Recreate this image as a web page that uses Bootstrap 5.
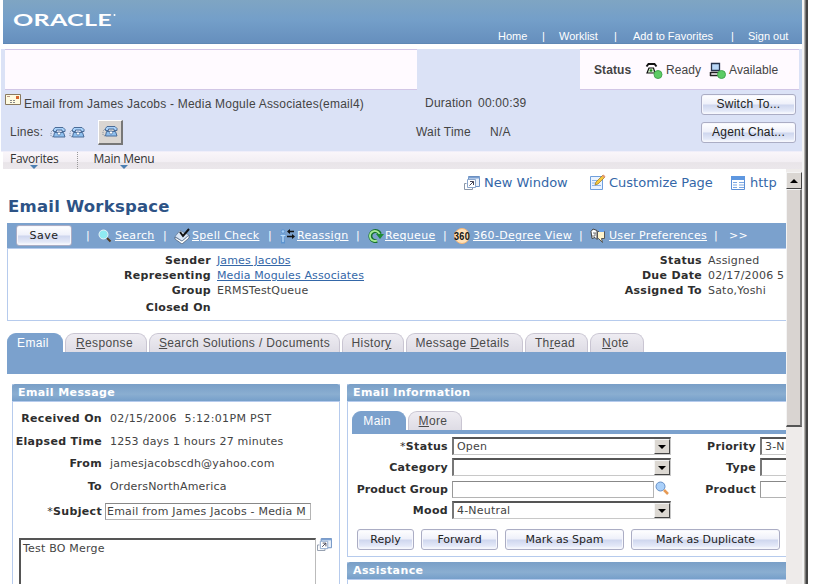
<!DOCTYPE html>
<html lang="en">
<head>
<meta charset="utf-8">
<title>Email Workspace</title>
<link rel="stylesheet" href="https://cdn.jsdelivr.net/npm/bootstrap@5.3.0/dist/css/bootstrap.min.css">
<style>
body{width:813px;height:584px;overflow:hidden;background:#fff;color:#444;font:11px/15px "DejaVu Sans",Verdana,sans-serif;letter-spacing:.2px}
a{color:#3467a8}
svg{display:block;flex:none}
.arial{font-family:"Liberation Sans",Arial,sans-serif;font-size:12px;letter-spacing:.22px}
.shell{width:802px;height:584px}
.edge{width:6px;background:linear-gradient(90deg,#f4f4f4 0 2px,#b5b2ad 2px 3px,#777 3px 4px,#444 4px 6px)}
.masthead{height:44px;margin-left:3px;background:linear-gradient(#7fa5c3,#749fc9 45%,#668fbd);border-bottom:1px solid #5f88b5;color:#fff}
.masthead-links{width:304px;padding-top:29px;font-size:11px;letter-spacing:0;display:grid!important;grid-template-columns:44px 17px 55px 19px 98px 17px 1fr;white-space:nowrap}
.cti{height:103px;margin:5px 0 0 1px;background:#dbe2f6;border-bottom:1px solid #f0eefa}
.cti-box{height:41px;background:#fffaff;border:solid #d2c6e6;border-width:1px 0}
.cti-left{width:412px;margin-left:4px}
.cti-right{width:219px;margin-right:3px;padding:2px 0 0 14px;letter-spacing:.1px}
.cti-line{display:grid;white-space:nowrap}
.pill{display:flex;align-items:center;justify-content:center;height:21px;padding:0;border:1px solid #abadc4;border-radius:3px;background:linear-gradient(#fff,#eef0fa 48%,#ced6ee 52%,#e4e9f8 85%,#fff);color:#222;white-space:nowrap;box-shadow:inset 0 0 0 1px #f6f7fd}
.phonebtn{width:25px;height:25px;background:#dad6d2;border:1px solid #fff;border-right:2px solid #777;border-bottom:2px solid #777;display:flex;align-items:center;justify-content:center}
.menubar{height:17px;margin-left:3px;background:linear-gradient(#faf6fa,#f2eef3 60%,#e9e5e9 62%,#ebe7eb);color:#333}
.menu-entry{position:relative;line-height:14px;font-family:"Open Sans",sans-serif;font-size:12px;letter-spacing:-.25px}
.menu-entry:after{content:"";position:absolute;left:50%;top:13px;margin-left:-4px;border:4px solid transparent;border-top-color:#4b7eb1;border-bottom:0}
.page{width:786px;height:415px;overflow:hidden;padding-left:7px}
.pagelinks{height:27px;padding-left:457px;font-size:13px;letter-spacing:0;color:#3467a8;white-space:nowrap}
.pagetitle{font:bold 16.500px/22px "DejaVu Sans",sans-serif;color:#2d5386;letter-spacing:.22px;margin:0 0 5px 1px;height:22px}
.toolstrip{height:26px;letter-spacing:.3px;background:#7ba1cd;border-bottom:1px solid #b6cbed;padding-left:9px;display:grid;grid-template-columns:70px 12px 17px 48px 11px 18px 76px 11px 18px 59px 12px 17px 58px 11px 19px 106px 11px 19px 105px 15px 30px;align-items:center;color:#fff;white-space:nowrap;width:779px}
.toolstrip a{color:#fff}
.summary{height:72px;border:1px solid #b6cbed;border-width:0 0 1px 1px;padding-top:4px}
.summary-grid{display:grid;grid-template-columns:203px 414px 77px 84px;column-gap:0;grid-template-rows:15px 15px 15px 19px;white-space:nowrap;align-items:center}
.summary-grid>:nth-child(4n+2){padding-left:6px}
.summary-grid>:nth-child(4n+4){padding-left:6px}
.summary-grid a{letter-spacing:.12px}
.lbl{font-weight:bold;color:#2e2e2e;text-align:right;letter-spacing:.32px;white-space:nowrap;justify-self:end}
.tabs{height:19px;gap:2px;letter-spacing:.35px}
.tabpill{height:19px;border:1px solid #c9c5d2;border-bottom:0;border-radius:9px 9px 0 0;background:linear-gradient(#eeecf2,#dedce5);color:#4a4a4a;text-align:center;line-height:18px;white-space:nowrap}
.tabpill.on{background:#7ba1cd;border-color:#7ba1cd;color:#fff;padding-right:4px}
.tabband{height:22px;background:#7ba1cd}
.pane{border-left:1px solid #b6cbed}
.pane-head{height:18px;margin-left:-1px;padding-left:6px;background:linear-gradient(#799fc7,#8aaed1 60%,#769fca);border-bottom:1px solid #b6cbed;border-radius:3px 0 0 0;color:#fff;font-weight:bold;line-height:18px;letter-spacing:.4px}
.msg{width:328px;height:200px;border-right:1px solid #b6cbed;margin-left:5px}
.msg .pane-head{margin-right:-1px;border-radius:3px 3px 0 0}
.msg-grid{display:grid;grid-template-columns:89px 1fr;grid-template-rows:23px 22px 23px 23px 27px;padding-top:5px;align-items:center;white-space:nowrap}
.msg-grid>:nth-child(even){padding-left:8px}
.field{height:17px;border:1px solid #b4b4b4;border-top-color:#888;border-left-color:#999;background:#fff;padding:0 2px;white-space:nowrap}
.sel{height:18px;border:1px solid #c8c8c8;border-top:2px solid #555;border-left:2px solid #777;background:#fff;padding-left:3px;display:flex;justify-content:space-between;align-items:center;white-space:nowrap}
.arrow{width:16px;height:15px;background:#dcd8d2;border:1px solid #f5f5f5;border-right-color:#444;border-bottom-color:#444;display:flex;align-items:center;justify-content:center}
.arrow:before,.upbtn:before{content:"";border:4px solid transparent;border-top-color:#000;border-bottom:0}
.info{width:439px;margin-left:7px}
.info-grid{display:grid;grid-template-columns:100px 222px 78px 80px;column-gap:4px;grid-template-rows:20px 22px 22px 20px;align-items:center;padding-top:2px}
.memo{width:297px;height:60px;border:2px solid #555;border-right:1px solid #bbb;padding:1px 2px;margin:13px 0 0 6px}
.scroller{width:16px;height:415px;background:#eeebea}
.upbtn{height:17px;margin-top:3px;background:#dad6d2;border:1px solid #f4f4f4;border-right-color:#444;border-bottom-color:#444;display:flex;align-items:center;justify-content:center}
.upbtn:before{transform:rotate(180deg)}
.thumb{height:238px;background:#d9d4d1;border:1px solid #f4f4f4;border-right:2px solid #777;border-bottom:2px solid #555}
</style>
<script src="https://cdn.jsdelivr.net/npm/bootstrap@5.3.0/dist/js/bootstrap.bundle.min.js"></script>
</head>
<body>
<svg width="0" height="0" class="position-absolute">
 <symbol id="phone" viewBox="0 0 16 11"><path d="M4.500 5.500h9l1.500 4.500H3.500z" fill="#8fc0ef" stroke="#4a6c98"/><path d="M3.500 4.500v-2l1.500-2h8l2 2v2h-3V3H6.500v1.500z" fill="#a9d2fa" stroke="#4a6c98"/><circle cx="9" cy="6.500" r="1.600" fill="#fff" stroke="#4a6c98" stroke-width=".7"/><path d="M3 3 1 5v4l2 1" fill="none" stroke="#7b8798" stroke-dasharray="1 1"/></symbol>
 <symbol id="popout" viewBox="0 0 16 14"><path d="M4.500.5h11v10h-11z" fill="#e9f0fa" stroke="#6b8fc0"/><path d="M4 1h12v1.500H4z" fill="#7ca1d2"/><path d="M2.500 7.500h-2v6h8v-2" fill="none" stroke="#8a96a8"/><path d="M3.500 3.500h8v8h-8z" fill="#fff" stroke="#8aa6cc"/><path d="m5.500 9.500 4-4M6 5.500h3.500V9" fill="none" stroke="#445"/></symbol>
</svg>
<div class="d-flex">
<div class="shell">
 <header class="masthead d-flex justify-content-between">
  <svg width="114" height="30"><text x="10" y="26" font-family="Lato,sans-serif" font-weight="bold" font-size="17" fill="#fff" textLength="99" lengthAdjust="spacingAndGlyphs">ORACLE</text><circle cx="111.500" cy="15" r="1" fill="#fff"/></svg>
  <nav class="masthead-links arial"><span>Home</span><span>|</span><span>Worklist</span><span>|</span><span>Add to Favorites</span><span>|</span><span>Sign out</span></nav>
 </header>
 <section class="cti arial">
  <div class="d-flex justify-content-between">
   <div class="cti-box cti-left"></div>
   <div class="cti-box cti-right d-flex align-items-center">
    <b style="width:51px">Status</b>
    <svg width="18" height="17" viewBox="0 0 18 17"><path d="M1.500 4.500 3.500 2h6l2 2.500" fill="none" stroke="#111" stroke-width="2"/><path d="m4 6-2 5h8L8.500 6z" fill="#d9f3d0" stroke="#111" stroke-width="1.200"/><circle cx="6" cy="8.500" r="1.300" fill="#188818"/><circle cx="13" cy="12.500" r="4" fill="#5ccc63" stroke="#46a650"/></svg>
    <span style="width:43px;margin-left:3px">Ready</span>
    <svg width="17" height="17" viewBox="0 0 17 17"><path d="M2.500 1.500h8v7h-8z" fill="#b9d7f7" stroke="#27344d" stroke-width="1.300"/><path d="M1.500 10.500h8M1 13.500h8M1.500 10v4" stroke="#222" stroke-width="1.500"/><circle cx="12.500" cy="12.500" r="4" fill="#5ccc63" stroke="#46a650"/></svg>
    <span style="margin-left:3px">Available</span>
   </div>
  </div>
  <div class="cti-line align-items-center" style="grid-template-columns:23px 400px 53px 220px 95px;height:28px;padding-left:4px">
   <svg width="17" height="12" class="mb-2"><path d="M.5.5h15v10H.5z" fill="#fffbe0" stroke="#8a7a5e"/><path d="M2 2.500h3" stroke="#b98"/><path d="M11 2h3v3h-3z" fill="#d7662e"/><path d="M5 6.500h6M5 8.500h6" stroke="#888" stroke-dasharray="2 1"/></svg>
   <span style="margin-left:-4px">Email from James Jacobs - Media Mogule Associates(email4)</span><span style="margin:0 0 2px -3px">Duration</span><span style="margin:0 0 2px -3px">00:00:39</span><button class="pill arial">Switch To...</button>
  </div>
  <div class="cti-line align-items-center" style="grid-template-columns:40px 19px 29px 318px 74px 206px 95px;height:28px;padding-left:9px">
   <span>Lines:</span><svg width="16" height="11"><use href="#phone"/></svg><svg width="16" height="11"><use href="#phone"/></svg><span class="phonebtn"><svg width="16" height="11"><use href="#phone"/></svg></span><span>Wait Time</span><span>N/A</span><button class="pill arial" style="margin-left:5px;width:95px">Agent Chat...</button>
  </div>
 </section>
 <nav class="menubar d-flex"><span class="menu-entry" style="margin-left:7px">Favorites</span><span style="border-left:1px dotted #999;margin:0 16px 0 18px"></span><span class="menu-entry">Main Menu</span></nav>
 <div class="d-flex">
 <main class="page">
  <div class="pagelinks d-flex align-items-center">
   <svg width="16" height="14"><use href="#popout"/></svg><span style="width:109px;padding-left:4px">New Window</span>
   <svg width="17" height="17"><path d="M1.500 2.500h12v13h-12z" fill="#eaf3ff" stroke="#6f9fdc"/><path d="M3 6.500h7M3 9h7M3 11.500h9" stroke="#8db4e6"/><path d="m6 11 1-3 7-7 2 2-7 7z" fill="#f7ca3e" stroke="#9a7620" stroke-width=".7"/><path d="m13 2 2 2 1.500-1.500L14.500.5z" fill="#e29878"/></svg><span style="width:125px;padding-left:3px">Customize Page</span>
   <svg width="14" height="14"><path d="M.5.5h13v13H.5z" fill="#fff" stroke="#5c8fd6"/><path d="M0 0h14v4H0z" fill="#5e97e0"/><path d="M2 6.500h4M2 9h4M2 11.500h4M8 6.500h5M8 9h5M8 11.500h5" stroke="#7ba7e2"/></svg><span style="padding-left:5px">http</span>
  </div>
  <h1 class="pagetitle">Email Workspace</h1>
  <div class="toolstrip">
   <button class="pill" style="width:56px;font-size:11px;letter-spacing:.5px">Save</button><span>|</span>
   <svg width="14" height="14"><path d="m9 9 3.500 3.500" stroke="#533b20" stroke-width="2"/><circle cx="5.500" cy="5.500" r="4.500" fill="#8feaf2" stroke="#e8f3f8"/></svg><a href="#">Search</a><span>|</span>
   <svg width="17" height="16"><path d="m1 9 0 2 7 5 7-6V7l-7 6z" fill="#fff" stroke="#41556f" stroke-width=".7"/><path d="m1 8.500 5-6 9 4.500-7 6z" fill="#d8e6f6" stroke="#6a7f9c" stroke-width=".8"/><path d="m6 4 3 4 6-7" fill="none" stroke="#111" stroke-width="2"/></svg><a href="#">Spell Check</a><span>|</span>
   <svg width="17" height="16"><circle cx="4" cy="3.500" r="1.800" fill="#a4cdf5" stroke="#5d94d0"/><path d="M1 7.500h6M4 7v7M2 14h4" stroke="#5d94d0" stroke-width="3"/><path d="M1.500 7.500h5M4 7v7" stroke="#b9dbfa" stroke-width="1.400"/><path d="M9 3.500h6M8 8.500h6" stroke="#111" stroke-width="1.500"/><path d="m11 1-3 2.500 3 2.500zM13 6l3 2.500-3 2.500z" fill="#111"/></svg><a href="#">Reassign</a><span>|</span>
   <svg width="16" height="15"><path d="M9 12.800A5 5 0 1 1 12 6" fill="none" stroke="#16722b" stroke-width="4"/><path d="M9 12.500A5 5 0 1 1 11.500 6" fill="none" stroke="#a5ea96" stroke-width="1.800"/><path d="M8 6h8l-4 5z" fill="#1d8c35"/></svg><a href="#">Requeue</a><span>|</span>
   <svg width="17" height="16"><circle cx="8" cy="8" r="7.500" fill="#ffe1b8" stroke="#f2b477"/><text x="0" y="11.500" font-family="Liberation Sans,sans-serif" font-weight="bold" font-size="10" textLength="16" lengthAdjust="spacingAndGlyphs" fill="#111">360</text></svg><a href="#">360-Degree View</a><span>|</span>
   <svg width="17" height="16"><path d="M1 3.500 3 1l4 1.500v9l-2-2-3 1z" fill="#fff" stroke="#444"/><path d="M7.500 3.500h7v7h-3l1 4-4-4h-1z" fill="#fff4cc" stroke="#555"/><path d="M9 2.500h5" stroke="#6ba2e8" stroke-width="3"/><path d="M3 5h3M5 5v3H2" fill="none" stroke="#777"/></svg><a href="#">User Preferences</a><span>|</span><span>&gt;&gt;</span>
  </div>
  <section class="summary"><div class="summary-grid">
   <span class="lbl">Sender</span><span><a href="#">James Jacobs</a></span><span class="lbl">Status</span><span>Assigned</span>
   <span class="lbl">Representing</span><span><a href="#">Media Mogules Associates</a></span><span class="lbl">Due Date</span><span>02/17/2006 5</span>
   <span class="lbl">Group</span><span>ERMSTestQueue</span><span class="lbl">Assigned To</span><span>Sato,Yoshi</span>
   <span class="lbl">Closed On</span>
  </div></section>
  <nav class="tabs d-flex arial" style="margin-top:12px">
   <span class="tabpill on" style="width:56px">Email</span><span class="tabpill" style="width:82px;padding-right:3px"><u>R</u>esponse</span><span class="tabpill" style="width:191px"><u>S</u>earch Solutions / Documents</span><span class="tabpill" style="width:62px;padding-right:3px">Histor<u>y</u></span><span class="tabpill" style="width:117px;padding-right:4px">Message <u>D</u>etails</span><span class="tabpill" style="width:63px;padding-right:3px">Th<u>r</u>ead</span><span class="tabpill" style="width:54px;padding-right:3px"><u>N</u>ote</span>
  </nav>
  <div class="tabband"></div>
  <div class="d-flex" style="margin-top:10px">
   <section class="pane msg">
    <div class="pane-head">Email Message</div>
    <div class="msg-grid">
     <span class="lbl">Received On</span><span style="letter-spacing:.35px">02/15/2006 &nbsp;5:12:01PM PST</span>
     <span class="lbl">Elapsed Time</span><span>1253 days 1 hours 27 minutes</span>
     <span class="lbl">From</span><span>jamesjacobscdh@yahoo.com</span>
     <span class="lbl">To</span><span>OrdersNorthAmerica</span>
     <span class="lbl"><span class="fw-normal">*</span>Subject</span><div style="padding-left:3px"><div class="field" style="width:206px;padding:0 1px">Email from James Jacobs - Media M</div></div>
    </div>
    <div class="d-flex"><div class="memo">Test BO Merge</div><svg width="15" height="13" style="margin:13px 0 0 1px"><use href="#popout"/></svg></div>
   </section>
   <div class="info">
    <section class="pane" style="height:173px;border-bottom:1px solid #b6cbed">
     <div class="pane-head">Email Information</div>
     <nav class="tabs d-flex arial" style="margin:9px 0 0 4px"><span class="tabpill on" style="width:54px">Main</span><span class="tabpill" style="width:54px;padding-right:4px"><u>M</u>ore</span></nav>
     <div style="height:4px;margin-left:4px;background:#7ba1cd"></div>
     <div class="info-grid">
      <span class="lbl"><span class="fw-normal">*</span>Status</span><div class="sel" style="width:219px">Open<i class="arrow"></i></div><span class="lbl">Priority</span><div class="sel">3-N</div>
      <span class="lbl">Category</span><div class="sel" style="width:219px"><span></span><i class="arrow"></i></div><span class="lbl">Type</span><div class="sel"></div>
      <span class="lbl" style="letter-spacing:.1px">Product Group</span><div class="d-flex"><div class="field" style="width:202px"></div><svg width="15" height="15" style="margin-left:1px"><circle cx="5.500" cy="5.500" r="4.500" fill="#a9d0fa" stroke="#668fc5"/><path d="m9 9 4 4" stroke="#e69a55" stroke-width="2.500"/></svg></div><span class="lbl">Product</span><div class="field"></div>
      <span class="lbl">Mood</span><div class="sel" style="width:219px">4-Neutral<i class="arrow"></i></div>
     </div>
     <div class="d-flex" style="padding:9px 0 0 9px;gap:7px;letter-spacing:.4px"><button class="pill" style="width:57px">Reply</button><button class="pill" style="width:77px">Forward</button><button class="pill" style="width:119px">Mark as Spam</button><button class="pill" style="width:149px">Mark as Duplicate</button></div>
    </section>
    <section class="pane" style="height:30px;margin-top:5px"><div class="pane-head">Assistance</div></section>
   </div>
  </div>
 </main>
 <aside class="scroller"><div class="upbtn"></div><div class="thumb"></div></aside>
 </div>
</div>
<div class="edge"></div>
</div>
</body>
</html>
